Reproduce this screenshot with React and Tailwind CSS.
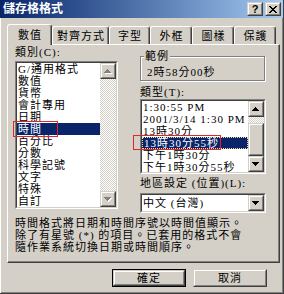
const FONT = "font-['Liberation_Serif','Noto_Sans_CJK_TC',serif]";

const tabs = [
  { label: '數值', w: 'w-[45px]', active: true },
  { label: '對齊方式', w: 'w-[57px]' },
  { label: '字型', w: 'w-[41px]' },
  { label: '外框', w: 'w-[42px]' },
  { label: '圖樣', w: 'w-[42px]' },
  { label: '保護', w: 'w-[42px]' },
];

const categories = ['G/通用格式', '數值', '貨幣', '會計專用', '日期', '時間', '百分比', '分數', '科學記號', '文字', '特殊', '自訂'];
const types = ['1:30:55 PM', '2001/3/14 1:30 PM', '13時30分', '13時30分55秒', '下午1時30分', '下午1時30分55秒'];

function Arrow({ down, disabled }) {
  const rows = [[3, 1], [2, 3], [1, 5], [0, 7]];
  const r = down ? [...rows].reverse() : rows;
  return (
    <svg width="8" height="5" viewBox="0 0 8 5" shapeRendering="crispEdges">
      {disabled && r.map(([x, w], i) => <rect key={'s' + i} x={x + 1} y={i + 1} width={w} height={1} fill="#ffffff" />)}
      {r.map(([x, w], i) => <rect key={i} x={x} y={i} width={w} height={1} fill={disabled ? '#808080' : '#000000'} />)}
    </svg>
  );
}

function Raised({ className = '', children }) {
  return (
    <div className={`border border-t-[#d4d0c8] border-l-[#d4d0c8] border-r-[#404040] border-b-[#404040] bg-[#d4d0c8] ${className}`}>
      <div className="flex h-full w-full items-center justify-center border border-t-white border-l-white border-r-[#808080] border-b-[#808080]">
        {children}
      </div>
    </div>
  );
}

function Sunken({ className = '', children }) {
  return (
    <div className={`border border-t-[#808080] border-l-[#808080] border-r-white border-b-white ${className}`}>
      <div className="flex h-full w-full border border-t-[#404040] border-l-[#404040] border-r-[#d4d0c8] border-b-[#d4d0c8] bg-white">
        {children}
      </div>
    </div>
  );
}

function Track({ className = '' }) {
  return <div className={`bg-[image:repeating-conic-gradient(#d4d0c8_0%_25%,#ffffff_0%_50%)] bg-[length:2px_2px] ${className}`} />;
}

function CloseGlyph() {
  const rows = [[[0, 2], [6, 2]], [[1, 2], [5, 2]], [[2, 4]], [[3, 2]], [[2, 4]], [[1, 2], [5, 2]], [[0, 2], [6, 2]]];
  return (
    <svg width="8" height="7" viewBox="0 0 8 7" shapeRendering="crispEdges">
      {rows.map((segs, y) => segs.map(([x, w], i) => <rect key={y + '-' + i} x={x} y={y} width={w} height={1} fill="#000" />))}
    </svg>
  );
}

export default function App() {
  return (
    <div className={`relative flex h-[294px] w-[284px] flex-col overflow-hidden bg-[#d4d0c8] text-[11px] leading-[12px] tracking-[1px] text-black ${FONT} border-r border-b border-[#404040] shadow-[inset_1px_0_0_#ffffff,inset_-1px_-1px_0_#808080]`}>
      {/* title bar */}
      <div className="flex h-[18px] items-center justify-between bg-gradient-to-r from-[#0a246a] to-[#a6caf0] pl-[3px] pr-[2px]">
        <span className="text-[12px] font-bold tracking-normal text-white">儲存格格式</span>
        <div className="flex gap-[2px]">
          <Raised className="h-[14px] w-[16px]">
            <span className="font-['Liberation_Sans',sans-serif] text-[11px] font-bold leading-[10px] tracking-normal">?</span>
          </Raised>
          <Raised className="h-[14px] w-[16px]">
            <CloseGlyph />
          </Raised>
        </div>
      </div>

      {/* tabs */}
      <div className="mt-[6px] flex h-[20px] items-end pl-[7px]">
        {tabs.map((t) => (
          <div
            key={t.label}
            className={`relative flex items-center justify-center rounded-t-[3px] border-t border-l border-white border-r border-r-[#404040] bg-[#d4d0c8] pl-px shadow-[inset_-1px_0_0_#808080] ${t.w} ${t.active ? 'z-10 -mb-px h-[21px]' : 'h-[18px]'}`}
          >
            {t.label}
          </div>
        ))}
      </div>

      {/* tab panel */}
      <div className="ml-[7px] flex h-[219px] w-[273px] flex-col border-t border-l border-white border-r border-b border-r-[#404040] border-b-[#404040] shadow-[inset_-1px_-1px_0_#808080]">
        <div className="flex pl-[7px]">
          {/* left column */}
          <div className="flex w-[103px] flex-col">
            <div className="mt-px">類別(C):</div>
            <Sunken className="mt-[3px] h-[148px] w-[103px]">
              <div className="flex flex-1 flex-col overflow-hidden">
                {categories.map((c) => (
                  <div key={c} className={`h-[12px] shrink-0 whitespace-nowrap pl-px ${c === '時間' ? 'bg-[#0a246a] text-white' : ''}`}>
                    {c}
                  </div>
                ))}
              </div>
              <div className="flex w-[16px] flex-col">
                <Raised className="h-[16px] w-[16px]"><Arrow disabled /></Raised>
                <Track className="flex-1" />
                <Raised className="h-[16px] w-[16px]"><Arrow down disabled /></Raised>
              </div>
            </Sunken>
          </div>

          {/* right column */}
          <div className="ml-[22px] flex w-[126px] flex-col">
            <div className="relative mt-[11px] h-[25px] w-[125px] border border-[#808080] shadow-[1px_1px_0_#ffffff,inset_1px_1px_0_#ffffff]">
              <span className="absolute -top-[7px] left-[3px] bg-[#d4d0c8] px-px">範例</span>
              <div className="pl-[6px] pt-[9px]">2時58分00秒</div>
            </div>
            <div className="mt-[5px]">類型(T):</div>
            <Sunken className="mt-px h-[75px] w-[126px]">
              <div className="flex flex-1 flex-col overflow-hidden">
                {types.map((t) => (
                  <div
                    key={t}
                    className={`h-[12px] shrink-0 whitespace-nowrap pl-px ${t === '13時30分55秒' ? 'border border-dotted border-[#f5db95] bg-[#0a246a] pl-0 leading-[10px] text-white' : ''}`}
                  >
                    {t}
                  </div>
                ))}
              </div>
              <div className="flex w-[16px] flex-col">
                <Raised className="h-[16px] w-[16px]"><Arrow /></Raised>
                <Track className="h-[6px]" />
                <Raised className="h-[33px] w-[16px]" />
                <Track className="flex-1" />
                <Raised className="h-[16px] w-[16px]"><Arrow down /></Raised>
              </div>
            </Sunken>
            <div className="mt-[3px] whitespace-nowrap">地區設定 (位置)(L):</div>
            <Sunken className="mt-[4px] h-[20px] w-[126px]">
              <div className="flex flex-1 items-center pl-px">中文 (台灣)</div>
              <Raised className="h-[16px] w-[16px]"><Arrow down /></Raised>
            </Sunken>
          </div>
        </div>

        <div className="mt-[4px] pl-[7px]">
          <p>時間格式將日期和時間序號以時間值顯示。</p>
          <p>除了有星號 (*) 的項目。已套用的格式不會</p>
          <p>隨作業系統切換日期或時間順序。</p>
        </div>
      </div>

      {/* buttons */}
      <div className="mt-[6px] flex justify-end gap-[7px] pr-[16px]">
        <div className="border border-black">
          <Raised className="h-[16px] w-[72px]">確定</Raised>
        </div>
        <Raised className="h-[18px] w-[74px]">取消</Raised>
      </div>

      {/* red annotation boxes */}
      <div className="absolute left-[14px] top-[27px] h-[13px] w-[32px] border border-[#e0262c]" />
      <div className="absolute left-[13px] top-[121px] h-[16px] w-[45px] border border-[#e0262c]" />
      <div className="absolute left-[133px] top-[135px] h-[15px] w-[88px] border border-[#e0262c]" />
    </div>
  );
}
